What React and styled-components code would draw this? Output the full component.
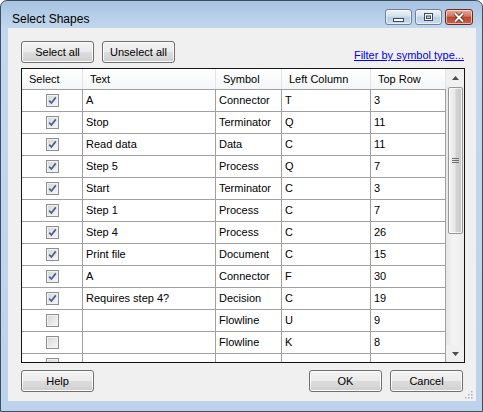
import React from "react";
import styled, { createGlobalStyle } from "styled-components";

const Global = createGlobalStyle`
  body {
    margin: 0;
    background: #ffffff;
    font-family: "Liberation Sans", Arial, sans-serif;
  }
`;

const Window = styled.div`
  width: 483px;
  height: 412px;
  box-sizing: border-box;
  border: 1px solid #3d4f63;
  border-radius: 7px 7px 0 0;
  background: linear-gradient(#a7c3e1, #c3d8ee 28px, #bcd3eb 100%);
  display: flex;
  flex-direction: column;
  padding: 0 6px 10px 7px;
  overflow: hidden;
`;

const TitleBar = styled.div`
  height: 27px;
  display: flex;
  align-items: flex-start;
  justify-content: space-between;
  flex-shrink: 0;
`;

const Title = styled.div`
  padding: 11px 0 0 4px;
  font-size: 12px;
  line-height: 14px;
  color: #000;
`;

const CaptionGroup = styled.div`
  display: flex;
  gap: 3px;
  margin: 8px 3px 0 0;
`;

const CaptionButton = styled.div`
  width: ${(p) => (p.$close ? 28 : 27)}px;
  height: 16px;
  box-sizing: border-box;
  border: 1px solid ${(p) => (p.$close ? "#6d2a1f" : "#6f8199")};
  border-radius: 3px;
  background: ${(p) =>
    p.$close
      ? "linear-gradient(#e8a898, #d27763 45%, #bb4631 50%, #c9634a)"
      : "linear-gradient(#eef3f9, #d6e2f0 45%, #bccfe5 50%, #c9dbef)"};
  box-shadow: inset 0 0 0 1px rgba(255, 255, 255, 0.55);
  display: flex;
  align-items: center;
  justify-content: center;
`;

const Client = styled.div`
  position: relative;
  flex: 1;
  background: #f0f0f0;
  padding: 13px 11px 0 13px;
  display: flex;
  flex-direction: column;
`;

const Toolbar = styled.div`
  height: 22px;
  display: flex;
  align-items: flex-end;
  gap: 8px;
`;

const Button = styled.button`
  width: 73px;
  height: 22px;
  box-sizing: border-box;
  padding: 0;
  border: 1px solid #707070;
  border-radius: 3px;
  background: linear-gradient(#f2f2f2 0%, #ebebeb 50%, #dddddd 50%, #cfcfcf 100%);
  box-shadow: inset 0 0 0 1px #fbfbfb;
  font-family: "Liberation Sans", Arial, sans-serif;
  font-size: 11px;
  color: #000;
`;

const Link = styled.a`
  margin-left: auto;
  margin-right: 1px;
  margin-bottom: 1px;
  font-size: 11px;
  line-height: 13px;
  color: #0000ff;
  text-decoration: underline;
  cursor: pointer;
`;

const TableFrame = styled.div`
  margin-top: 5px;
  height: 295px;
  box-sizing: border-box;
  border: 1px solid #141414;
  background: #ffffff;
  display: flex;
  overflow: hidden;
`;

const GridArea = styled.div`
  flex: 1;
  display: flex;
  flex-direction: column;
`;

const cols = "61px 133px 66px 89px 1fr";

const HeaderRow = styled.div`
  display: grid;
  grid-template-columns: ${cols};
  height: 21px;
  box-sizing: border-box;
  border-bottom: 1px solid #a0a0a0;
  background: linear-gradient(#ffffff, #f4f5f7);
  flex-shrink: 0;
`;

const HeaderCell = styled.div`
  padding-left: 7px;
  border-right: 1px solid #e4e4e4;
  font-size: 11px;
  line-height: 20px;
  color: #000;
  white-space: nowrap;
`;

const Row = styled.div`
  display: grid;
  grid-template-columns: ${cols};
  height: 22px;
  flex-shrink: 0;
`;

const Cell = styled.div`
  box-sizing: border-box;
  border-right: 1px solid #a0a0a0;
  border-bottom: 1px solid #a0a0a0;
  padding-left: 3px;
  font-size: 11px;
  line-height: 21px;
  color: #000;
  white-space: nowrap;
  overflow: hidden;
  display: flex;
  align-items: center;
  justify-content: ${(p) => (p.$center ? "center" : "flex-start")};
`;

const Box = styled.span`
  width: 13px;
  height: 13px;
  box-sizing: border-box;
  border: 1px solid #8f8f8f;
  background: linear-gradient(135deg, #d6d6d6, #f7f7f7);
  box-shadow: inset 0 0 0 1px #f2f2f2;
  display: flex;
  align-items: center;
  justify-content: center;
  margin-right: 3px;
`;

const Scrollbar = styled.div`
  width: 18px;
  display: flex;
  flex-direction: column;
  background: linear-gradient(90deg, #e6e6e6, #f4f4f4 40%, #ececec);
`;

const ScrollButton = styled.div`
  height: 17px;
  flex-shrink: 0;
  display: flex;
  align-items: center;
  justify-content: center;
  background: #f0f0f0;
`;

const Thumb = styled.div`
  margin: 1px 1px 0 2px;
  height: 147px;
  box-sizing: border-box;
  border: 1px solid #979797;
  border-radius: 2px;
  background: linear-gradient(90deg, #f4f4f4, #e8e8e8 45%, #d3d3d3 55%, #c9c9c9);
  box-shadow: inset 0 0 0 1px rgba(255, 255, 255, 0.7);
  display: flex;
  align-items: center;
  justify-content: center;
`;

const Track = styled.div`
  flex: 1;
`;

const Footer = styled.div`
  margin-top: 7px;
  display: flex;
  gap: 8px;
  padding-right: 2px;
`;

const Spacer = styled.div`
  flex: 1;
`;

const Grip = styled.svg`
  position: absolute;
  right: 3px;
  bottom: 2px;
`;

const rows = [
  [true, "A", "Connector", "T", "3"],
  [true, "Stop", "Terminator", "Q", "11"],
  [true, "Read data", "Data", "C", "11"],
  [true, "Step 5", "Process", "Q", "7"],
  [true, "Start", "Terminator", "C", "3"],
  [true, "Step 1", "Process", "C", "7"],
  [true, "Step 4", "Process", "C", "26"],
  [true, "Print file", "Document", "C", "15"],
  [true, "A", "Connector", "F", "30"],
  [true, "Requires step 4?", "Decision", "C", "19"],
  [false, "", "Flowline", "U", "9"],
  [false, "", "Flowline", "K", "8"],
  [false, "", "", "", ""],
];

const Check = ({ on }) => (
  <Box>
    {on && (
      <svg width="9" height="9" viewBox="0 0 9 9">
        <path d="M1.2 4.6 L3.4 7 L7.8 1.4" fill="none" stroke="#4b5f8e" strokeWidth="1.7" />
      </svg>
    )}
  </Box>
);

const App = () => {
  return (
    <>
      <Global />
      <Window>
        <TitleBar>
          <Title>Select Shapes</Title>
          <CaptionGroup>
            <CaptionButton>
              <svg width="11" height="12" viewBox="0 0 11 12">
                <rect x="0.5" y="7.5" width="10" height="3" fill="#fff" stroke="#3b4a5e" />
              </svg>
            </CaptionButton>
            <CaptionButton>
              <svg width="11" height="10" viewBox="0 0 11 10">
                <rect x="1.5" y="1.5" width="8" height="7" fill="none" stroke="#3b4a5e" strokeWidth="1" />
                <rect x="2.5" y="2.5" width="6" height="5" fill="none" stroke="#fff" strokeWidth="1" />
                <rect x="3.5" y="4" width="4" height="2.5" fill="none" stroke="#3b4a5e" strokeWidth="1" />
              </svg>
            </CaptionButton>
            <CaptionButton $close>
              <svg width="14" height="11" viewBox="0 0 14 11">
                <path d="M3 1.5 L11 9.5 M11 1.5 L3 9.5" stroke="#5a2117" strokeWidth="3.6" />
                <path d="M3 1.5 L11 9.5 M11 1.5 L3 9.5" stroke="#ffffff" strokeWidth="2" />
              </svg>
            </CaptionButton>
          </CaptionGroup>
        </TitleBar>
        <Client>
          <Toolbar>
            <Button>Select all</Button>
            <Button>Unselect all</Button>
            <Link>Filter by symbol type...</Link>
          </Toolbar>
          <TableFrame>
            <GridArea>
              <HeaderRow>
                <HeaderCell>Select</HeaderCell>
                <HeaderCell>Text</HeaderCell>
                <HeaderCell>Symbol</HeaderCell>
                <HeaderCell>Left Column</HeaderCell>
                <HeaderCell>Top Row</HeaderCell>
              </HeaderRow>
              {rows.map(([on, text, symbol, col, row], i) => (
                <Row key={i}>
                  <Cell $center>
                    <Check on={on} />
                  </Cell>
                  <Cell>{text}</Cell>
                  <Cell>{symbol}</Cell>
                  <Cell>{col}</Cell>
                  <Cell>{row}</Cell>
                </Row>
              ))}
            </GridArea>
            <Scrollbar>
              <ScrollButton>
                <svg width="7" height="4" viewBox="0 0 7 4">
                  <path d="M0 4 L3.5 0 L7 4 Z" fill="#4d4d4d" />
                </svg>
              </ScrollButton>
              <Thumb>
                <svg width="7" height="7" viewBox="0 0 7 7">
                  <path d="M0 1.5 H7 M0 3.5 H7 M0 5.5 H7" stroke="#6e6e6e" strokeWidth="1" />
                </svg>
              </Thumb>
              <Track />
              <ScrollButton>
                <svg width="7" height="4" viewBox="0 0 7 4">
                  <path d="M0 0 L3.5 4 L7 0 Z" fill="#4d4d4d" />
                </svg>
              </ScrollButton>
            </Scrollbar>
          </TableFrame>
          <Footer>
            <Button>Help</Button>
            <Spacer />
            <Button>OK</Button>
            <Button>Cancel</Button>
          </Footer>
          <Grip width="9" height="9" viewBox="0 0 9 9">
            {[
              [7, 1],
              [4, 4],
              [7, 4],
              [1, 7],
              [4, 7],
              [7, 7],
            ].map(([x, y], i) => (
              <rect key={i} x={x} y={y} width="1.5" height="1.5" fill="#a9b3bf" />
            ))}
          </Grip>
        </Client>
      </Window>
    </>
  );
};

export default App;
